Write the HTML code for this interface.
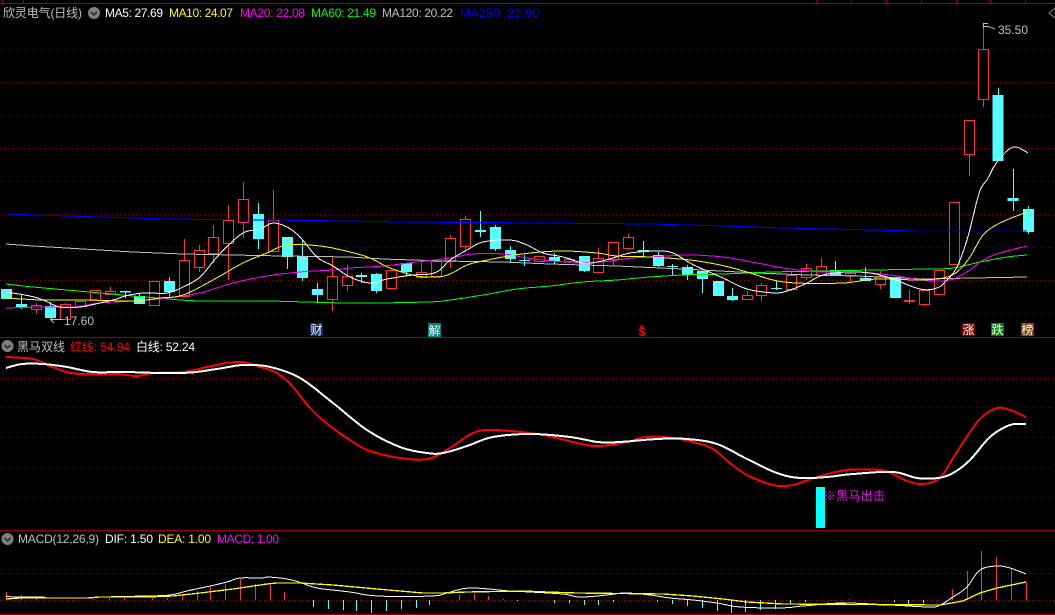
<!DOCTYPE html>
<html lang="zh"><head><meta charset="utf-8"><title>欣灵电气(日线)</title>
<style>
html,body{margin:0;padding:0;background:#000;width:1055px;height:615px;overflow:hidden}
svg{display:block;position:absolute;left:0;top:0}
text{font-family:"Liberation Sans","WenQuanYi Zen Hei","Noto Sans CJK SC",sans-serif;font-size:12px}
.l{fill:none;shape-rendering:crispEdges}
.c{shape-rendering:crispEdges}
</style></head><body>
<svg width="1055" height="615" viewBox="0 0 1055 615" xmlns="http://www.w3.org/2000/svg">
<!-- frames -->
<g class="c" stroke="#a00000" stroke-width="1" fill="none">
<path d="M0 3.5H1055M2.5 0V3M23.5 0V3M816.5 0V3M851.5 0V3M886.5 0V3M921.5 0V3M956.5 0V3M990.5 0V3M1025.5 0V3"/>
<path d="M0 337.5H1055M0 530.5H1055M0 614.5H1055"/>
</g>
<!-- grids -->
<g class="c" stroke="#7a0000" stroke-width="1" stroke-dasharray="1 3" fill="none">
<path d="M0 49.5H1055M0 82.5H1055M0 115.5H1055M0 148.5H1055M0 181.5H1055M0 214.5H1055M0 247.5H1055M0 280.5H1055M0 313.5H1055"/>
<path d="M0 378.5H1055M0 407.5H1055M0 437.5H1055M0 467.5H1055M0 497.5H1055"/>
</g>
<path class="c" stroke="#a00000" stroke-dasharray="1 3" fill="none" d="M0 573.500H1055"/>
<path class="c" stroke="#a00000" stroke-dasharray="1 2" fill="none" d="M0 600.500H1055"/>
<!-- wicks red -->
<path class="c" stroke="#ff3232" fill="none" d="M36.5 303V314M65.5 303V319M110.5 287V294M184.5 239V296M199.5 245V272M213.5 225V263M228.5 205V280M243.5 182V238M273.5 190V251M332.5 256V311M347.5 265V291M421.5 261V279M436.5 259V276M450.5 235V268M465.5 216V250M569.5 257V263M598.5 248V272M613.5 242V266M628.5 234V250M747.5 291V300M761.5 283V301M791.5 272V291M806.5 264V280M821.5 258V275M850.5 272V282M880.5 271V289M909.5 290V304M924.5 290V306M969.5 120V176M983.5 27V107"/>
<!-- wicks cyan -->
<path class="c" stroke="#54ffff" fill="none" d="M21.5 295V309M50.5 302V318M125.5 291V298M139.5 293V304M169.5 277V297M258.5 203V249M287.5 237V269M302.5 239V281M317.5 283V302M361.5 273V283M376.5 273V293M406.5 263V276M480.5 211V237M495.5 225V251M510.5 246V262M524.5 255V266M554.5 253V264M584.5 256V272M643.5 241V257M658.5 252V267M672.5 264V275M687.5 265V280M702.5 271V293M732.5 288V301M776.5 281V290M835.5 261V275M865.5 267V281M998.5 88V161M1013.5 169V211M1028.5 206V234"/>
<!-- cyan bodies -->
<path class="c" fill="#54ffff" d="M1 289h11v10H1zM16 304h11v4H16zM45 306h11v12H45zM120 291h11v1.500H120zM134 296h11v8H134zM164 281h11v11H164zM253 214h11v25H253zM282 237h11v20H282zM297 256h11v22H297zM312 289h11v6H312zM356 275h11v2H356zM371 274h11v17H371zM401 263h11v9H401zM475 230h11v2H475zM490 227h11v22H490zM505 250h11v9H505zM519 260h11v1H519zM549 257h11v4H549zM579 256h11v15H579zM638 250h11v2H638zM653 255h11v11H653zM667 266h11v1H667zM682 267h11v8H682zM697 271h11v8H697zM713 281h11v15H713zM727 296h11v4H727zM771 288h11v1H771zM830 270h11v5H830zM860 278h11v3H860zM890 277h11v21H890zM992.500 95h11v66H992.500zM1007.500 198h11v3H1007.500zM1023 209h11v23H1023z"/>
<!-- red bodies -->
<path class="c" fill="#000" stroke="#ff3232" d="M31.500 305.500h10v4h-10zM60.500 304.500h10v15h-10zM75.500 301.500h10v5h-10zM90.500 290.500h10v10h-10zM105.500 291.500h10v3h-10zM149.500 281.500h10v24h-10zM179.500 260.500h10v36h-10zM194.500 250.500h10v17h-10zM208.500 237.500h10v16h-10zM223.500 220.500h10v23h-10zM238.500 199.500h10v23h-10zM268.500 220.500h10v31h-10zM327.500 276.500h10v23h-10zM342.500 276.500h10v9h-10zM386.500 270.500h10v18h-10zM416.500 272.500h10v5h-10zM431.500 261.500h10v15h-10zM445.500 238.500h10v23h-10zM460.500 219.500h10v27h-10zM534.500 256.500h10v5h-10zM564.500 259.500h10v2h-10zM593.500 258.500h10v14h-10zM608.500 242.500h10v17h-10zM623.500 237.500h10v11h-10zM742.500 295.500h10v4h-10zM756.500 285.500h10v10h-10zM786.500 275.500h10v14h-10zM801.500 268.500h10v9h-10zM816.500 266.500h10v9h-10zM845.500 273.500h10v2h-10zM875.500 276.500h10v8h-10zM904.500 300.500h10v1h-10zM919.500 290.500h10v14h-10zM934.500 270.500h10v24h-10zM949.500 202.500h10v62h-10zM964.500 120.500h10v34h-10zM978.500 49.500h10v50h-10z"/>
<!-- MA lines -->
<g class="l" stroke-width="1">
<polyline stroke="#0000ff" points="5,214 67,216 167,219 267,220 350,221 400,222 547,223 650,224 725,226 783,228 873,230 917,231"/>
<polyline stroke="#000090" points="917,231 1027,231"/>
<polyline stroke="#c0c0c0" points="6,244 33,246 83,249 133,252 183,254 233,255 283,256 350,257 383,259 443,261 503,262 550,264 617,266 683,269 757,273 807,275 857,276 923,279 973,278 1027,277"/>
<polyline class="s" stroke="#00ff00" points="6,284 33,287 67,290 100,293 133,296 157,298 200,301 267,301 350,303 427,302 450,300 483,295 517,289 550,286 583,282 617,280 650,277 683,275 723,274 773,272 823,271 923,269 953,268 980,262 1007,257 1027,255"/>
<polyline class="s" stroke="#ff00ff" points="6,308 43,307 73,307 100,303 133,301 167,298 200,293 233,283 267,276 300,272 333,270 350,268 383,266 417,262 450,258 473,254 503,254 533,259 567,262 600,262 633,258 667,256 690,255 723,257 757,263 790,269 823,272 857,272 890,275 923,280 950,280 970,270 983,260 1000,253 1027,246"/>
<polyline class="s" stroke="#ffff00" points="6,298 43,300 87,300 133,301 160,298 183,295 213,280 243,263 267,253 287,245 320,246 350,252 370,258 390,268 417,276 437,277 450,274 467,265 483,261 503,257 530,253 563,251 597,253 617,256 650,257 690,260 720,265 747,272 773,280 797,283 843,283 877,279 920,280 943,278 957,272 970,257 983,235 1000,223 1027,212"/>
<polyline class="s" stroke="#ffffff" points="6,292 30,296 43,300 60,307 80,307 100,303 117,299 125,296 143,293 167,293 183,287 200,277 217,257 233,241 245,232 260,229 273,223 287,227 300,237 317,257 333,266 350,277 370,283 387,279 413,275 430,274 440,270 450,260 467,250 483,242 510,240 527,245 543,253 563,257 583,263 597,262 613,258 630,253 657,251 673,253 690,263 707,271 723,278 747,289 775,293 790,290 807,283 823,275 847,272 870,273 890,278 920,289 937,288 947,280 957,267 967,240 973,217 980,190 987,180 997,162 1013,147 1028,153"/>
</g>
<!-- DMA panel -->
<rect class="c" x="816" y="487" width="9" height="41" fill="#00ffff"/>
<g class="l" stroke-width="2">
<polyline class="s" stroke="#ff0000" points="6,357 33,359 50,366 67,372 83,374 117,374 137,376 153,373 183,372 207,367 227,363 243,362 260,367 277,373 293,387 310,408 330,426 353,442 370,451 400,458 428,459 450,448 473,433 493,430 530,433 553,437 573,442 593,446 610,445 627,442 647,437 673,438 697,443 713,449 730,463 747,475 773,485 793,485 817,477 847,470 880,470 893,474 907,481 923,484 940,478 953,458 970,432 982,417 997,408 1010,410 1026,417"/>
<polyline class="s" stroke="#ffffff" points="6,368 22,364 43,364 67,367 93,372 123,372 182,373 217,369 243,365 270,367 300,378 333,403 367,430 400,447 427,453 443,453 467,446 493,437 530,434 570,437 598,442 620,442 657,439 687,439 717,444 747,459 777,473 800,478 827,477 853,474 893,472 917,478 938,478 953,473 970,460 990,437 1010,425 1026,424"/>
</g>
<!-- MACD bars -->
<path class="c" stroke="#ff3232" fill="none" d="M6.500 592V600M21.500 595V600M36.500 597V600M94.500 599V600M109.500 598V600M124.500 598V600M152.500 598V600M167.500 598V600M182.500 594V600M197.500 591V600M210.500 587V600M225.500 584V600M240.500 579V600M255.500 584V600M270.500 585V600M284.500 592V600M459.500 595V600M474.500 594V600M488.500 596V600M503.500 599V600M849.500 599V600M952.500 589V600M967.500 571V600M981.500 551V600M996.500 557V600M1011.500 569V600M1026.500 582V600"/>
<path class="c" stroke="#54ffff" fill="none" d="M313.500 600V607M328.500 600V609M343.500 600V610M356.500 600V611M371.500 600V613M386.500 600V611M401.500 600V609M416.500 600V608M429.500 600V605M517.500 600V601M554.500 600V603M569.500 600V603M584.500 600V605M598.500 600V605M613.500 600V602M657.500 600V602M672.500 600V604M687.500 600V606M702.500 600V608M717.500 600V611M731.500 600V613M745.500 600V612M760.500 600V610M775.500 600V609M790.500 600V604M805.500 600V602M894.500 600V602M908.500 600V604M923.500 600V603"/>
<g class="l" stroke-width="1">
<polyline class="s" stroke="#ffffff" points="6,596 13,597 43,597 47,598 87,598 102,597 145,596 170,595 187,591 210,586 227,582 240,578 262,578 268,577 287,579 302,583 317,588 350,592 378,596 432,596 447,593 470,588 510,591 530,592 563,594 580,597 607,595 625,593 650,595 670,598 693,600 717,603 740,607 780,608 803,606 843,603 890,605 930,607 940,605 953,597 967,587 980,570 997,566 1010,568 1026,574"/>
<polyline stroke="#ffff00" stroke-width="1.300" points="6,599 20,598 87,598 100,597 145,597 173,596 200,593 233,589 267,584 277,583 300,583 333,585 377,589 423,593 443,593 467,592 523,591 547,592 577,593 663,594 693,596 723,599 747,602 783,604 940,605 963,601 980,593 997,588 1026,582"/>
</g>
<!-- icons -->
<g>
<circle cx="94" cy="13" r="6" fill="#808080"/><path d="M91 12l3 3 3-3" stroke="#222" stroke-width="1.500" fill="none"/>
<circle cx="7.500" cy="346" r="6" fill="#808080"/><path d="M4.500 345l3 3 3-3" stroke="#222" stroke-width="1.500" fill="none"/>
<circle cx="7.500" cy="539" r="6" fill="#808080"/><path d="M4.500 538l3 3 3-3" stroke="#222" stroke-width="1.500" fill="none"/>
</g>
<path class="c" d="M1055 8L1049 13L1055 18" stroke="#808080" fill="none"/>
<path class="c" d="M983.500 28V23.500H988M983.500 26.500H987M987 26L995 29" stroke="#c0c0c0" fill="none"/>
<path class="c" d="M50 319.500H63M50.500 319.500L54 316M50.500 319.500L54 323" stroke="#c0c0c0" fill="none"/>
<!-- labels -->
<g text-rendering="optimizeSpeed">
<text x="3" y="17" fill="#c0c0c0" textLength="79">欣灵电气(日线)</text>
<text x="105" y="17" fill="#ffffff" textLength="58">MA5: 27.69</text>
<text x="169" y="17" fill="#ffff00" textLength="64">MA10: 24.07</text>
<text x="240" y="17" fill="#ff00ff" textLength="65">MA20: 22.08</text>
<text x="311" y="17" fill="#00ff00" textLength="65">MA60: 21.49</text>
<text x="382" y="17" fill="#c0c0c0" textLength="71">MA120: 20.22</text>
<text x="460" y="17" fill="#0000ff" textLength="79">MA250: 22.90</text>
<text x="17" y="351" fill="#c0c0c0" textLength="48">黑马双线</text>
<text x="70" y="351" fill="#ff0000" textLength="60">红线: 54.94</text>
<text x="136" y="351" fill="#ffffff" textLength="59">白线: 52.24</text>
<text x="18" y="543" fill="#c0c0c0" textLength="81">MACD(12,26,9)</text>
<text x="105" y="543" fill="#ffffff" textLength="48">DIF: 1.50</text>
<text x="158" y="543" fill="#ffff00" textLength="53">DEA: 1.00</text>
<text x="217" y="543" fill="#ff00ff" textLength="62">MACD: 1.00</text>
<text x="998" y="34" fill="#c0c0c0" textLength="30">35.50</text>
<text x="64" y="325" fill="#c0c0c0" textLength="30">17.60</text>
<text x="824" y="500" fill="#e81ce8" textLength="61">※黑马出击</text>
</g>
<!-- badges -->
<g class="c">
<rect x="310" y="323" width="13" height="13" fill="#0c2f5c"/>
<rect x="428" y="323" width="13" height="14" fill="#008080"/>
<rect x="962" y="323" width="13" height="13" fill="#800000"/>
<rect x="991" y="323" width="13" height="13" fill="#008000"/>
<rect x="1021" y="323" width="13" height="13" fill="#804000"/>
</g>
<g fill="#ffffff" text-anchor="middle">
<text x="316.500" y="334">财</text>
<text x="434.500" y="335">解</text>
<text x="968.500" y="334">涨</text>
<text x="997.500" y="334">跌</text>
<text x="1027.500" y="334">榜</text>
</g>
<text x="642" y="336" fill="#ff0000" text-anchor="middle" style="font-size:12px;font-weight:bold">$</text>
<path class="c" d="M640 327.500L642 325.500L644 327.500" stroke="#ff0000" fill="none"/>
</svg>
<script>
document.querySelectorAll('polyline.s').forEach(function(e){
  var p=e.getAttribute('points').trim().split(/\s+/).map(function(s){return s.split(',').map(Number)}),o=[];
  for(var i=0;i<p.length-1;i++){
    var a=p[Math.max(i-1,0)],b=p[i],c=p[i+1],d=p[Math.min(i+2,p.length-1)];
    var n=Math.max(2,Math.round((c[0]-b[0])/3));
    for(var k=0;k<n;k++){
      var t=k/n,u=t*t,v=u*t,q=[0,1].map(function(j){
        return .5*(2*b[j]+(c[j]-a[j])*t+(2*a[j]-5*b[j]+4*c[j]-d[j])*u+(3*b[j]-a[j]-3*c[j]+d[j])*v)});
      o.push(q[0].toFixed(1)+','+q[1].toFixed(1));
    }
  }
  var z=p[p.length-1];o.push(z[0]+','+z[1]);
  e.setAttribute('points',o.join(' '));
});
</script>
</body></html>
